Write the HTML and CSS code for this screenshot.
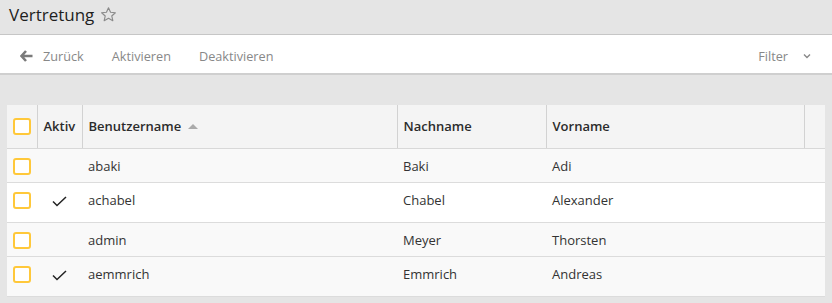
FILE: index.html
```html
<!DOCTYPE html>
<html lang="de">
<head>
<meta charset="utf-8">
<title>Vertretung</title>
<link rel="stylesheet" href="styles.css">
</head>
<body>
<header class="titlebar">
  <h1 class="title">Vertretung</h1>
  <svg class="star" width="17" height="17" viewBox="0 0 24 24"><path d="M12 2.5l2.9 6.3 6.8.7-5.1 4.6 1.5 6.7L12 17.3l-6.1 3.5 1.5-6.7-5.1-4.6 6.8-.7z" fill="none" stroke="#8a8a8a" stroke-width="1.6" stroke-linejoin="round"/></svg>
</header>
<nav class="toolbar">
  <div class="actions">
    <button class="btn btn-back"><svg class="back-icon" width="13" height="12" viewBox="0 0 13 12"><path d="M6 1L1.5 6 6 11M2 6h10.5" fill="none" stroke="#7a7a7a" stroke-width="2.6" stroke-linejoin="miter"/></svg>Zurück</button>
    <button class="btn">Aktivieren</button>
    <button class="btn">Deaktivieren</button>
  </div>
  <button class="btn btn-filter">Filter<svg class="chev" width="8" height="6" viewBox="0 0 8 6"><path d="M1 1.5l3 3 3-3" fill="none" stroke="#888" stroke-width="1.4"/></svg></button>
</nav>
<main class="content">
  <table class="grid">
    <colgroup>
      <col class="c-check"><col class="c-aktiv"><col class="c-user"><col class="c-last"><col class="c-first"><col class="c-rest">
    </colgroup>
    <thead>
      <tr>
        <th class="cb-cell"><span class="cb"></span></th>
        <th>Aktiv</th>
        <th>Benutzername <span class="sort"></span></th>
        <th>Nachname</th>
        <th>Vorname</th>
        <th></th>
      </tr>
    </thead>
    <tbody>
      <tr class="r-short alt">
        <td class="cb-cell"><span class="cb"></span></td><td></td><td>abaki</td><td>Baki</td><td>Adi</td><td></td>
      </tr>
      <tr class="r-tall">
        <td class="cb-cell"><span class="cb"></span></td><td class="chk-cell"><svg class="chk" width="15" height="11" viewBox="0 0 15 11"><path d="M1 5.5l4 4L14 1" fill="none" stroke="#222" stroke-width="1.5"/></svg></td><td>achabel</td><td>Chabel</td><td>Alexander</td><td></td>
      </tr>
      <tr class="r-short alt">
        <td class="cb-cell"><span class="cb"></span></td><td></td><td>admin</td><td>Meyer</td><td>Thorsten</td><td></td>
      </tr>
      <tr class="r-tall alt">
        <td class="cb-cell"><span class="cb"></span></td><td class="chk-cell"><svg class="chk" width="15" height="11" viewBox="0 0 15 11"><path d="M1 5.5l4 4L14 1" fill="none" stroke="#222" stroke-width="1.5"/></svg></td><td>aemmrich</td><td>Emmrich</td><td>Andreas</td><td></td>
      </tr>
    </tbody>
  </table>
</main>
</body>
</html>
```
FILE: styles.css
```css
* { box-sizing: border-box; }
html, body { margin: 0; padding: 0; }
body {
  background: #e5e5e5;
  font-family: "Open Sans", "Liberation Sans", sans-serif;
  font-size: 13px;
  color: #333;
  width: 832px;
  height: 303px;
  overflow: hidden;
}
.titlebar {
  height: 35px;
  display: flex;
  align-items: center;
  padding: 0 0 4px 9px;
  border-bottom: 1px solid #c6c6c6;
  background: #e5e5e5;
}
.title {
  margin: 0;
  font-size: 17px;
  font-weight: 400;
  color: #1e1e1e;
  line-height: 20px;
}
.star { margin-left: 6px; margin-top: -2px; }
.toolbar {
  height: 40px;
  background: #fff;
  border-bottom: 2px solid #cfcfcf;
  display: flex;
  align-items: center;
  justify-content: space-between;
  padding: 3px 21px 0 6px;
}
.actions { display: flex; align-items: center; }
.btn {
  border: 0;
  background: none;
  font-family: inherit;
  font-size: 12.7px;
  color: #888;
  padding: 0 14px;
  display: flex;
  align-items: center;
  height: 30px;
  cursor: pointer;
}
.back-icon { margin-right: 10px; }
.btn-filter { padding: 0; }
.chev { margin-left: 15px; }
.content { padding: 30px 7px 0 7px; }
.grid {
  width: 818px;
  table-layout: fixed;
  border-collapse: collapse;
  background: #fff;
}
.c-check { width: 30px; }
.c-aktiv { width: 45px; }
.c-user { width: 315px; }
.c-last { width: 149px; }
.c-first { width: 258px; }
.c-rest { width: 21px; }
.grid th {
  height: 43px;
  background: #f4f4f4;
  text-align: left;
  font-weight: 600;
  color: #2b2b2b;
  padding: 0 6px;
  border-left: 1px solid #d2d2d2;
  border-bottom: 1px solid #d8d8d8;
  white-space: nowrap;
}
.grid th:first-child { border-left: 0; }
.grid td {
  padding: 7px 6px 0 6px;
  line-height: 20px;
  vertical-align: top;
  border-bottom: 1px solid #dcdcdc;
  color: #333;
}
.grid td.cb-cell { padding: 9px 0 0 6px; }
.grid th.cb-cell { padding: 0 0 0 6px; }
.r-short td { height: 34px; }
.r-tall td { height: 40px; }
.alt td { background: #f9f9f9; }
.cb {
  display: block;
  width: 18px;
  height: 17px;
  border: 2px solid #ffc83a;
  border-radius: 3px;
  background: #fff;
}
.grid td.chk-cell { padding: 13px 0 0 0; }
.chk { display: block; margin-left: 15px; }
.sort {
  display: inline-block;
  width: 0;
  height: 0;
  border-left: 5px solid transparent;
  border-right: 5px solid transparent;
  border-bottom: 5px solid #aaa;
  margin-left: 3px;
  vertical-align: 2px;
}
```
